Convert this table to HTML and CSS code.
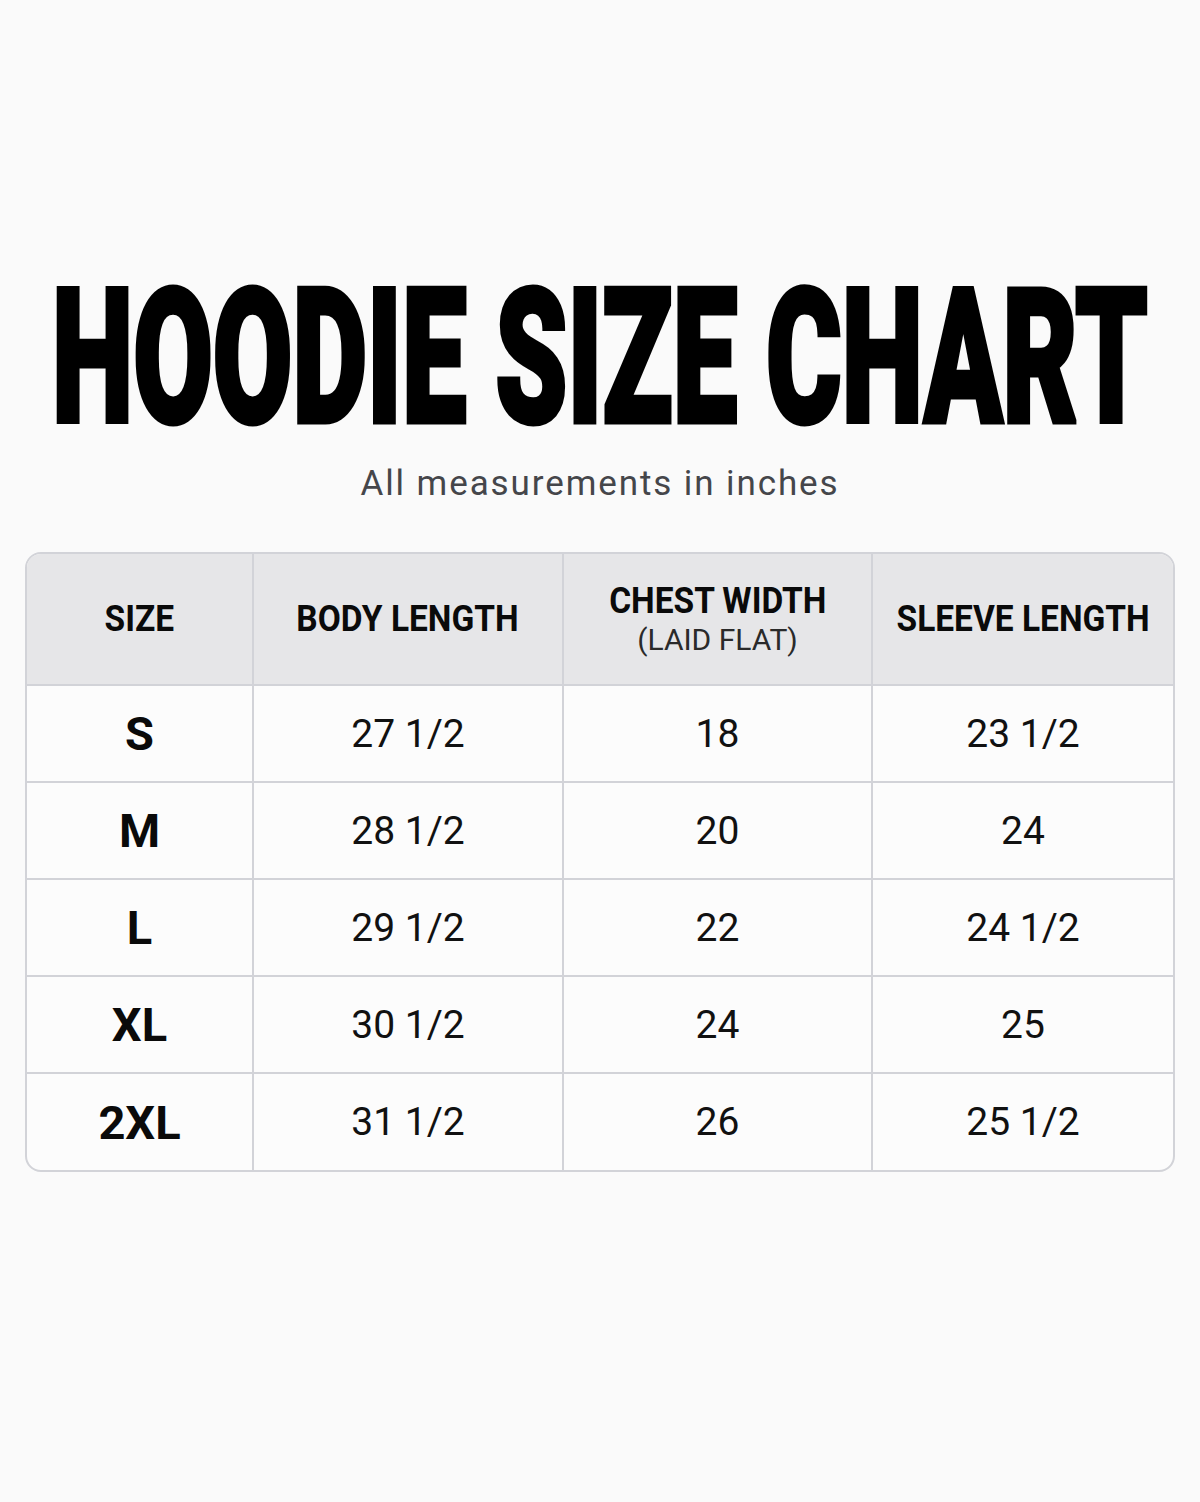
FILE: index.html
```html
<!DOCTYPE html>
<html lang="en">
<head>
<meta charset="utf-8">
<title>Hoodie Size Chart</title>
<link rel="stylesheet" href="styles.css">
</head>
<body>
<main class="page">
  <h1 class="title"><span class="title-text">HOODIE SIZE CHART</span></h1>
  <p class="subtitle">All measurements in inches</p>
  <div class="chart">
    <table class="size-table">
      <colgroup>
        <col class="c-size">
        <col class="c-body">
        <col class="c-chest">
        <col class="c-sleeve">
      </colgroup>
      <thead>
        <tr>
          <th><span class="hd">SIZE</span></th>
          <th><span class="hd">BODY LENGTH</span></th>
          <th><span class="hd">CHEST WIDTH</span><span class="sub">(LAID FLAT)</span></th>
          <th><span class="hd">SLEEVE LENGTH</span></th>
        </tr>
      </thead>
      <tbody>
        <tr><td class="size">S</td><td>27 1/2</td><td>18</td><td>23 1/2</td></tr>
        <tr><td class="size">M</td><td>28 1/2</td><td>20</td><td>24</td></tr>
        <tr><td class="size">L</td><td>29 1/2</td><td>22</td><td>24 1/2</td></tr>
        <tr><td class="size">XL</td><td>30 1/2</td><td>24</td><td>25</td></tr>
        <tr><td class="size">2XL</td><td>31 1/2</td><td>26</td><td>25 1/2</td></tr>
      </tbody>
    </table>
  </div>
</main>
</body>
</html>
```
FILE: styles.css
```css
* { box-sizing: border-box; }
html, body {
  margin: 0;
  padding: 0;
  background: #fafafa;
}
body {
  font-family: Roboto, "Liberation Sans", Arial, sans-serif;
  color: #111;
  overflow: hidden;
}
.page {
  display: flex;
  flex-direction: column;
  align-items: center;
  padding-top: 262px;
}
.title {
  margin: 0;
  width: 100%;
  height: 194px;
  display: flex;
  justify-content: center;
  font-size: 187px;
  line-height: 194px;
  font-weight: 900;
  color: #000;
  white-space: nowrap;
}
.title-text {
  display: block;
  flex: none;
  transform: scaleX(0.617);
  transform-origin: center;
  -webkit-text-stroke: 5px #000;
}
.subtitle {
  margin: 7px 0 0;
  font-size: 35px;
  line-height: 41px;
  letter-spacing: 1.9px;
  color: #45464a;
}
.chart {
  margin-top: 48px;
  width: 1150px;
  border: 2px solid #d2d3d8;
  border-radius: 16px;
  overflow: hidden;
  background: #fcfcfc;
}
.size-table {
  width: 100%;
  border-collapse: collapse;
  table-layout: fixed;
}
.c-size { width: 226px; }
.c-body { width: 310px; }
.c-chest { width: 309px; }
.c-sleeve { width: auto; }
.size-table th,
.size-table td {
  border-right: 2px solid #d2d3d8;
  border-bottom: 2px solid #d2d3d8;
  text-align: center;
  vertical-align: middle;
  padding: 0;
}
.size-table th:last-child,
.size-table td:last-child { border-right: none; }
.size-table tbody tr:last-child td { border-bottom: none; }
.size-table thead th {
  background: #e6e6e8;
  height: 131px;
  font-weight: 700;
}
.hd {
  display: inline-block;
  font-size: 36px;
  line-height: 40px;
  font-weight: 700;
  color: #0a0a0a;
  transform: scaleX(0.93);
  white-space: nowrap;
}
.sub {
  display: block;
  margin-top: 2px;
  font-size: 30px;
  line-height: 34px;
  font-weight: 400;
  color: #2a2a2a;
}
.size-table tbody td {
  height: 97px;
  font-size: 39px;
  font-weight: 400;
  color: #111;
}
.size-table tbody td.size {
  font-size: 47px;
  font-weight: 700;
  color: #0a0a0a;
}
```
